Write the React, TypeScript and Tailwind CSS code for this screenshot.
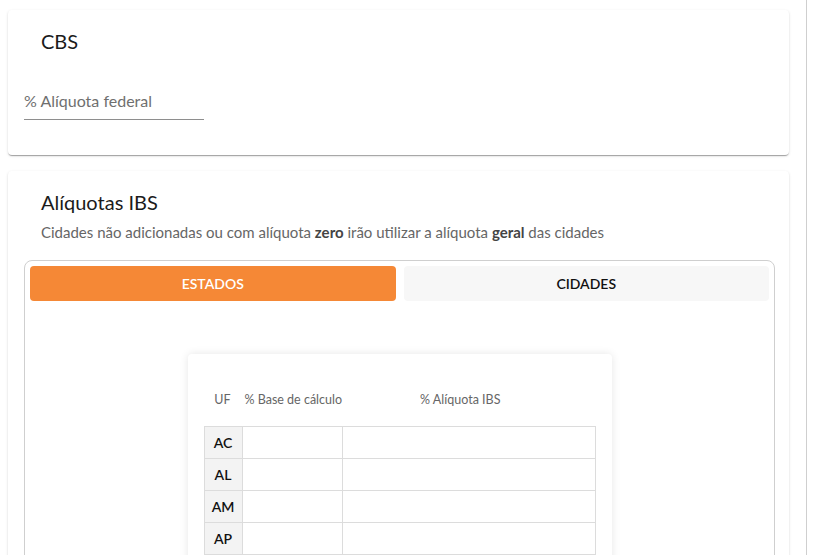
import React, { useState } from 'react';

const UFS = ['AC', 'AL', 'AM', 'AP', 'BA', 'CE'];

const paper =
  'bg-white rounded-[4px] shadow-[0_2px_1px_-1px_rgba(0,0,0,0.2),0_1px_1px_0_rgba(0,0,0,0.14),0_1px_3px_0_rgba(0,0,0,0.12)]';

const App: React.FC = () => {
  const [tab, setTab] = useState<'estados' | 'cidades'>('estados');

  return (
    <div className="h-[555px] w-[820px] overflow-hidden bg-white font-['Lato','Noto_Sans',sans-serif] text-[#1b1b1b]">
      <div className="h-full w-[807px] border-r border-[#cfcfcf] pl-2 pr-[17px] pt-[10px]">
        <div className={`${paper} h-[145px] px-4 pt-[19px]`}>
          <h2 className="pl-[17px] text-[20px] leading-[24px]">CBS</h2>
          <div className="mt-[36px] w-[180px] border-b border-[#8e8e8e] pb-[6px]">
            <span className="text-[16px] leading-[20px] text-[#6f6f6f]">% Alíquota federal</span>
          </div>
        </div>

        <div className={`${paper} mt-4 h-[420px] pl-4 pr-[14px] pt-[19px]`}>
          <h2 className="pl-[17px] text-[20px] leading-[24px]">Alíquotas IBS</h2>
          <p className="mt-[9px] pl-[17px] text-[15px] leading-[19px] text-[#666]">
            Cidades não adicionadas ou com alíquota <b className="font-bold text-[#444]">zero</b> irão utilizar a alíquota{' '}
            <b className="font-bold text-[#444]">geral</b> das cidades
          </p>

          <div className="mt-[18px] h-[320px] rounded-[8px] border border-[#cfcfcf] p-[5px]">
            <div className="flex gap-2">
              <button
                onClick={() => setTab('estados')}
                className={`h-[35px] flex-1 rounded-[4px] text-[14px] font-semibold ${
                  tab === 'estados' ? 'bg-[#f58836] text-white' : 'bg-[#f7f7f7] text-[#111]'
                }`}
              >
                ESTADOS
              </button>
              <button
                onClick={() => setTab('cidades')}
                className={`h-[35px] flex-1 rounded-[4px] text-[14px] font-semibold ${
                  tab === 'cidades' ? 'bg-[#f58836] text-white' : 'bg-[#f7f7f7] text-[#111]'
                }`}
              >
                CIDADES
              </button>
            </div>

            <div className="mt-[53px] flex justify-center">
              <div className="w-[424px] rounded-[4px] bg-white px-4 pt-[35px] shadow-[0_0_8px_rgba(0,0,0,0.1)]">
                <div className="flex h-[22px] items-center text-[12.5px] text-[#666]">
                  <span className="w-[38px] text-center">UF</span>
                  <span className="pl-[3px]">% Base de cálculo</span>
                  <span className="pl-[78px]">% Alíquota IBS</span>
                </div>
                <table className="mt-[15px] w-[392px] border-collapse">
                  <tbody>
                    {UFS.map((uf) => (
                      <tr key={uf} className="h-[32px]">
                        <td className="w-[38px] border border-[#dcdcdc] bg-[#f3f3f3] text-center text-[14px] font-semibold text-[#111]">
                          {uf}
                        </td>
                        <td className="w-[100px] border border-[#dcdcdc]"></td>
                        <td className="border border-[#dcdcdc]"></td>
                      </tr>
                    ))}
                  </tbody>
                </table>
              </div>
            </div>
          </div>
        </div>
      </div>
    </div>
  );
};

export default App;
